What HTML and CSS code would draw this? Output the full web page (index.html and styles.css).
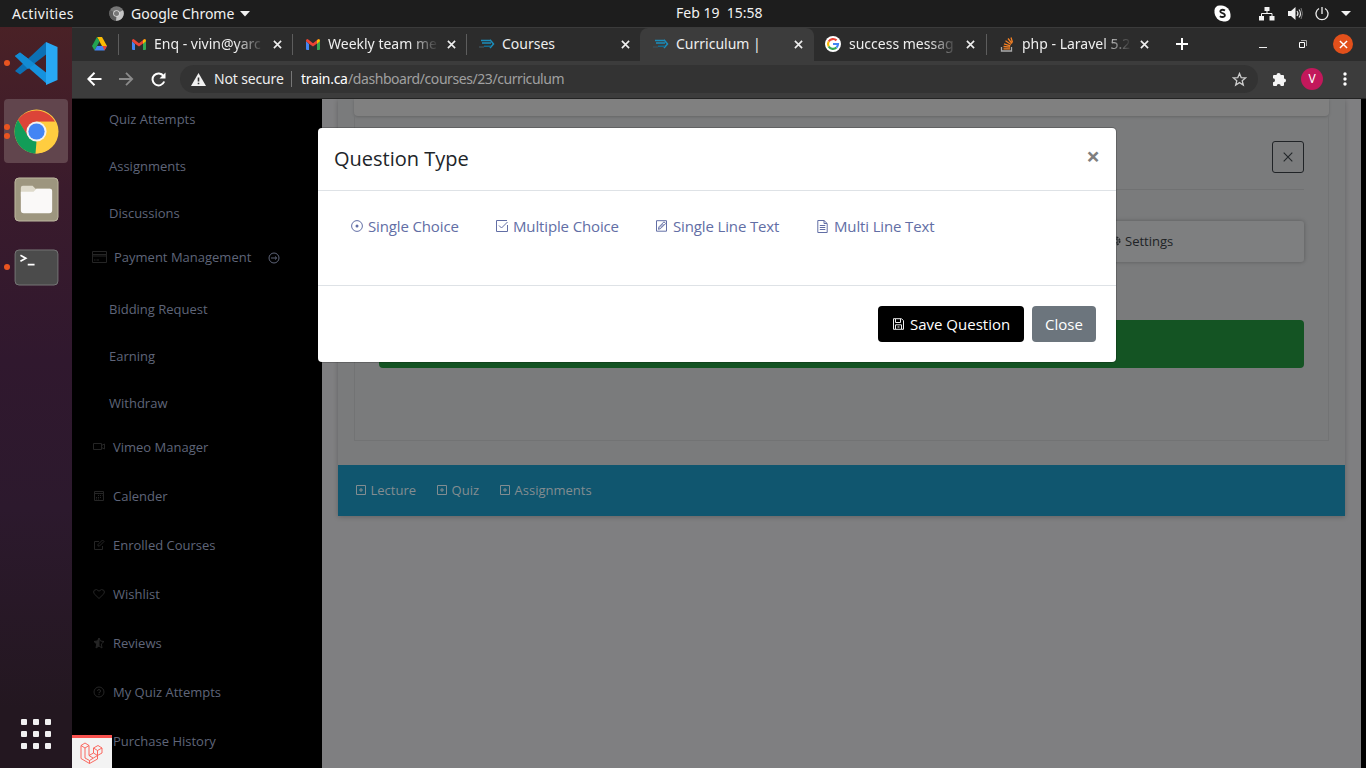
FILE: index.html
```html
<!DOCTYPE html>
<html lang="en">
<head>
<meta charset="utf-8">
<title>Curriculum</title>
<link rel="stylesheet" href="styles.css">
</head>
<body>
<svg class="defs" width="0" height="0">
  <symbol id="gmail" viewBox="0 0 14 11"><path fill="#4285f4" d="M0 2v8q0 1 1 1h2V5z"/><path fill="#34a853" d="M14 2v8q0 1-1 1h-2V5z"/><path fill="#ea4335" d="M0 2.200V1.500Q0 0 1.600 0L7 4.200 12.400 0l1.200.5-2.600 3.900L7 7.500 3 4.700z"/><path fill="#fbbc04" d="M11 1.200Q12.500-.5 13.600.5q.4.500.4 1.700L11 5z"/></symbol>
  <symbol id="train" viewBox="0 0 16 10"><path fill="none" stroke="#1b8dbb" stroke-width="1.500" d="M2 1.500h9M3 4h9M11 .8 14.500 5 11 9"/><path fill="none" stroke="#3c4d55" stroke-width="1.500" d="M0 8h5"/><path fill="none" stroke="#126b90" stroke-width="1.500" d="M5 7.300h7"/></symbol>
  <symbol id="x" viewBox="0 0 10 10"><path d="M1 1l8 8M9 1L1 9" fill="none" stroke="currentColor" stroke-width="1.800"/></symbol>
  <symbol id="plus" viewBox="0 0 10 10"><path d="M.5.500h9v9h-9zM5 3v4M3 5h4" fill="none" stroke="currentColor"/></symbol>
</svg>
<header class="topbar">
  <span class="activities">Activities</span>
  <svg class="mini-chrome" width="15" height="15" viewBox="0 0 15 15"><circle cx="7.500" cy="7.500" r="7.300" fill="#777"/><path d="M7.500 7.500 14 4.300A7.300 7.300 0 0 1 7 14.800z" fill="#c4c4c4"/><path d="M7.500 7.500 7 14.800A7.300 7.300 0 0 1 1.200 4z" fill="#5d5d5d"/><circle cx="7.500" cy="7.500" r="3.300" fill="#ddd"/><circle cx="7.500" cy="7.500" r="2.500" fill="#777"/></svg>
  <span class="appname">Google Chrome</span>
  <svg class="app-arrow" width="10" height="6"><path d="M0 0h10L5 5.500z" fill="#f2f2f2"/></svg>
  <span class="clock">Feb 19&nbsp; 15:58</span>
  <div class="tray">
    <svg width="17" height="17" viewBox="0 0 17 17"><rect x=".5" y=".5" width="12" height="12" rx="5" fill="#fff"/><rect x="4.500" y="4.500" width="12" height="12" rx="5" fill="#fff"/><circle cx="8.500" cy="8.500" r="7.500" fill="#fff"/><path d="M11 5.600Q8.500 4 6.600 5.500 5.500 7.200 8.500 8.200 11.800 9.200 10.600 11.200 8.500 12.800 5.800 11.300" fill="none" stroke="#1d1d1d" stroke-width="1.800"/></svg>
    <svg width="16" height="14" viewBox="0 0 16 14"><path d="M5.500 0h5v4h-5zM0 9h5v4.500H0zM10.500 9h5v4.500h-5z" fill="#f2f2f2"/><path d="M8 4v2.500M2.500 9V6.500h10.500V9" fill="none" stroke="#f2f2f2"/></svg>
    <svg width="16" height="13" viewBox="0 0 16 13"><path d="M0 4h3l4.500-4v13L3 9H0z" fill="#f2f2f2"/><path d="M9 4q2 2.500 0 5M11 2.500q3 4 0 8" fill="none" stroke="#ddd" stroke-width="1.200"/><path d="M13 1q3 5.500 0 11" fill="none" stroke="#777"/></svg>
    <svg width="14" height="14" viewBox="0 0 14 14"><path d="M4 1.500a6 6 0 1 0 6 0M7 0v7" fill="none" stroke="#eee" stroke-width="1.300"/></svg>
    <svg width="10" height="6"><path d="M0 0h10L5 5z" fill="#f2f2f2"/></svg>
  </div>
</header>
<div class="desktop">
  <nav class="dock">
    <div class="app"><i class="dots"><b></b></i>
      <svg width="43" height="43" viewBox="0 0 43 43"><path d="M0 14 5 10.500 33 32 32 42z" fill="#1592de"/><path d="M0 29 5 32.500 33 11 31 0z" fill="#0c70b5"/><path d="M0 14 5 10.500 20 22 13 27z" fill="#128bd4"/><path d="M31 0l11.500 5v33L31 43z" fill="#28a8f4"/></svg></div>
    <div class="app running"><i class="dots"><b></b><b></b></i>
      <svg width="45" height="45" viewBox="0 0 46 46"><circle cx="23" cy="23" r="22.500" fill="#ffcd40"/><path d="M23 13 14 28 4 11A22.500 22.500 0 0 1 42 13z" fill="#dc4438"/><path d="M4 11 14.500 28 23 33 22 45.500A22.500 22.500 0 0 1 4 11z" fill="#129d58"/><path d="M32 27 22 45.500A22.500 22.500 0 0 0 42 13H23z" fill="#ffcd40"/><circle cx="23" cy="23" r="10.300" fill="#f2f2f2"/><circle cx="23" cy="23" r="8.300" fill="#4385f4"/></svg></div>
    <div class="app"><i class="dots"></i>
      <svg width="45" height="45" viewBox="0 0 46 46"><rect x="1" y="1" width="44" height="44" rx="4" fill="#9d967f" stroke="#c0b9a2"/><path d="M7 17V11q0-2 2-2h10l3 3h15v8H7z" fill="#dedacb"/><path d="M7 15h13l3-3h14q2 0 2 2v20q0 3-3 3H10q-3 0-3-3z" fill="#faf9f8"/></svg></div>
    <div class="app"><i class="dots"><b></b></i>
      <svg width="45" height="37" viewBox="0 0 46 38"><rect x="1" y="1" width="44" height="36" rx="4" fill="#4b4b4b" stroke="#777"/><path d="M6.500 6.500 12 9.500l-5.500 3M14 16h7" fill="none" stroke="#fff" stroke-width="1.700"/></svg></div>
    <div class="grid-btn"><b></b><b></b><b></b><b></b><b></b><b></b><b></b><b></b><b></b></div>
  </nav>
  <section class="browser">
    <div class="tabs">
      <div class="pin"><svg width="15" height="14" viewBox="0 0 15 14"><path d="M5 0h5l5 9h-5z" fill="#fbbc04"/><path d="M5 0 0 9l2.500 4.500L7.500 4.500z" fill="#22a352"/><path d="M5 9h10l-2.500 4.500h-10z" fill="#4285f4"/><path d="M10.500 9H15l-2.500 4.500z" fill="#ea4335"/></svg></div>
      <div class="tab sep"><svg class="fav" width="15" height="11"><use href="#gmail"/></svg><span class="title fade t1">Enq - vivin@yarc</span><svg class="tx"><use href="#x"/></svg></div>
      <div class="tab sep"><svg class="fav" width="15" height="11"><use href="#gmail"/></svg><span class="title fade t2">Weekly team me</span><svg class="tx"><use href="#x"/></svg></div>
      <div class="tab sep"><svg class="fav" width="16" height="10"><use href="#train"/></svg><span class="title">Courses</span><svg class="tx"><use href="#x"/></svg></div>
      <div class="tab active"><svg class="fav" width="16" height="10"><use href="#train"/></svg><span class="title">Curriculum |</span><svg class="tx"><use href="#x"/></svg></div>
      <div class="tab google"><svg class="fav" width="16" height="16" viewBox="0 0 16 16"><circle cx="8" cy="8" r="8" fill="#fff"/><g fill="none" stroke-width="2.200"><path d="M3.700 5.500A5 5 0 0 1 11.500 4.400" stroke="#ea4335"/><path d="M3.700 5.500a5 5 0 0 0 0 5" stroke="#fbbc04"/><path d="M3.700 10.500a5 5 0 0 0 7.800 1" stroke="#34a853"/><path d="M8 8h5q0 2.200-1.500 3.500" stroke="#4285f4"/></g></svg><span class="title fade t5">success messag</span><svg class="tx"><use href="#x"/></svg></div>
      <div class="tab sep last"><svg class="fav" width="13" height="15" viewBox="0 0 13 15"><path d="M1 10v4h10v-4" fill="none" stroke="#aaa" stroke-width="1.300"/><path d="M3 11.800h6.500M3 9.500l6.500.6M3.500 6.800l6.300 2M5 3.800l5.500 3.700M7.500 1.500l4 5M10.500.5l1.500 5" fill="none" stroke="#f48024" stroke-width="1.300"/></svg><span class="title fade t6">php - Laravel 5.2</span><svg class="tx"><use href="#x"/></svg></div>
      <div class="newtab"><svg width="12" height="12"><path d="M6 0v12M0 6h12" stroke="#fff" stroke-width="2"/></svg></div>
      <div class="winbtns">
        <svg width="8" height="10"><path d="M0 8.500h8" stroke="#eee"/></svg>
        <svg width="8" height="8"><path d="M.5 2.500h5v5h-5z" fill="none" stroke="#fff"/><path d="M2 .5h5.500V6" fill="none" stroke="#aaa"/></svg>
        <span class="winclose"><svg width="9" height="9" viewBox="0 0 10 10"><path d="M1 1l8 8M9 1L1 9" stroke="#fff" stroke-width="1.600"/></svg></span>
      </div>
    </div>
    <div class="toolbar">
      <svg width="15" height="14" viewBox="0 0 15 14"><path d="M14.500 7H1.500M7.500.8 1.300 7l6.200 6.200" fill="none" stroke="#fff" stroke-width="2"/></svg>
      <svg width="15" height="14" viewBox="0 0 15 14"><path d="M0 7h13M7 .8 13.200 7 7 13.200" fill="none" stroke="#8b8b8b" stroke-width="1.800"/></svg>
      <svg width="15" height="15" viewBox="0 0 15 15"><path d="M12.500 4A6 6 0 1 0 13.200 9.500" fill="none" stroke="#fff" stroke-width="2"/><path d="M14.500.5v6h-6z" fill="#fff"/></svg>
      <div class="omnibox">
        <svg width="15" height="13" viewBox="0 0 15 13"><path d="M7.500 0 15 13H0z" fill="#f1f1f1"/><path d="M7.500 4.500v4M7.500 9.700v1.600" stroke="#333" stroke-width="1.600"/></svg>
        <span class="notsecure">Not secure</span><i class="bar"></i><span class="host">train.ca</span><span class="path">/dashboard/courses/23/curriculum</span>
        <svg class="star" width="15" height="15" viewBox="0 0 15 15"><path d="M7.500 1.500 9.200 5.600l4.400.3-3.400 2.800 1.100 4.300-3.800-2.400L3.700 13l1.100-4.300L1.400 5.900l4.400-.3z" fill="none" stroke="#ccc" stroke-width="1.300"/></svg>
      </div>
      <svg class="puzzle" width="15" height="15" viewBox="0 0 15 15"><path d="M4.500 3a2.100 2.100 0 0 1 4.200 0H11q1 0 1 1v2.500a2 2 0 0 1 0 4V13q0 1-1 1H8.700a2 2 0 0 0-4 0H2q-1 0-1-1v-2.700a2 2 0 0 0 0-4V4q0-1 1-1z" fill="#f5f5f5"/></svg>
      <span class="avatar">V</span>
      <svg class="kebab" width="4" height="14"><circle cx="2" cy="2" r="1.700" fill="#fff"/><circle cx="2" cy="7" r="1.700" fill="#fff"/><circle cx="2" cy="12" r="1.700" fill="#fff"/></svg>
    </div>
    <div class="page">
      <aside class="sidebar">
        <ul class="sub first"><li>Quiz Attempts</li><li>Assignments</li><li>Discussions</li></ul>
        <div class="item pay"><svg width="15" height="12" viewBox="0 0 15 12"><path d="M.5.500h14v11H.5zM.5 3.500h14v1.500H.5zM2 9h1.500M4.500 9H7" fill="none" stroke="currentColor"/></svg><span>Payment Management</span><svg class="go" width="12" height="12" viewBox="0 0 12 12"><circle cx="6" cy="6" r="5" fill="none" stroke="#5f6579"/><path d="M3 6h5.500M7 4.500 8.700 6 7 7.500" fill="none" stroke="#5f6579"/></svg></div>
        <ul class="sub"><li>Bidding Request</li><li>Earning</li><li>Withdraw</li></ul>
        <div class="item"><svg width="12" height="12" viewBox="0 0 12 12"><path d="M.5 2.500h8v6h-8zM8.500 4.500l3-1.500v5l-3-1.500" fill="none" stroke="currentColor"/></svg><span>Vimeo Manager</span></div>
        <div class="item"><svg width="12" height="12" viewBox="0 0 12 12"><path d="M1.500 1.500h9v9h-9zM1.500 3.500h9" fill="none" stroke="currentColor"/><path d="M5 5.500h4.500M3 7.500h6M3 9h4" fill="none" stroke="currentColor" stroke-dasharray="1 1"/></svg><span>Calender</span></div>
        <div class="item"><svg width="12" height="12" viewBox="0 0 12 12"><path d="M6 2.500H1.500v8h8V7M5 7V5.500L9.500 1l1.500 1.500L6.500 7z" fill="none" stroke="currentColor"/></svg><span>Enrolled Courses</span></div>
        <div class="item"><svg width="12" height="12" viewBox="0 0 12 12"><path d="M6 10.500 1.200 5.800Q0 4 1.200 2.300q2.300-2 4.800.9 2.500-2.900 4.800-.9Q12 4 10.800 5.800z" fill="none" stroke="currentColor"/></svg><span>Wishlist</span></div>
        <div class="item"><svg width="12" height="12" viewBox="0 0 12 12"><path d="M6 1v8l-3 2 .7-4L1 4.500l3.500-.6z" fill="currentColor" stroke="currentColor"/><path d="M6 1l1.500 3 3.500.5L8.300 7l.7 4-3-2" fill="none" stroke="currentColor"/></svg><span>Reviews</span></div>
        <div class="item"><svg width="12" height="12" viewBox="0 0 12 12"><circle cx="6" cy="6" r="5" fill="none" stroke="currentColor"/><path d="M4.500 5q0-1.500 1.500-1.500T7.500 5 6 6.500v.8M6 8v1" fill="none" stroke="currentColor"/></svg><span>My Quiz Attempts</span></div>
        <div class="item"><svg width="12" height="12"></svg><span>Purchase History</span></div>
      </aside>
      <main class="content">
        <div class="panel">
          <div class="topcard"></div>
          <div class="box">
            <div class="boxhead"><span class="closebox"><svg width="10" height="10" viewBox="0 0 10 10"><path d="M.7.700l8.600 8.600M9.300.7.700 9.300" stroke="#222629" stroke-width="1.100"/></svg></span></div>
            <div class="steps"><svg width="10" height="10" viewBox="0 0 10 10"><circle cx="5" cy="5" r="3.700" fill="none" stroke="#26292c" stroke-width="1.700" stroke-dasharray="1.900 1"/><circle cx="5" cy="5" r="2" fill="none" stroke="#26292c"/></svg><span>Settings</span></div>
            <div class="addq"></div>
          </div>
          <div class="actions"><span><svg width="10" height="10"><use href="#plus"/></svg>Lecture</span><span><svg width="10" height="10"><use href="#plus"/></svg>Quiz</span><span><svg width="10" height="10"><use href="#plus"/></svg>Assignments</span></div>
        </div>
      </main>
      <div class="scroll"></div>
      <div class="modal">
        <div class="mhead"><h5>Question Type</h5><span class="mclose">×</span></div>
        <div class="mbody">
          <a class="q1"><svg width="12" height="12" viewBox="0 0 12 12"><circle cx="6" cy="6" r="5.400" fill="none" stroke="currentColor"/><circle cx="6" cy="6" r="1.500" fill="currentColor"/></svg>Single Choice</a>
          <a class="q2"><svg width="12" height="12" viewBox="0 0 12 12"><path d="M11.500 5v6.500H.5V.5h10.500M3 5.500 5.500 8 11.500 2" fill="none" stroke="currentColor"/></svg>Multiple Choice</a>
          <a class="q3"><svg width="11" height="12" viewBox="0 0 11 12"><path d="M.5.700h10v10.500H.5zM2.500 9.300l.5-2.500 5-5 1.700 1.700-5 5zM4 7.500l3.500-3.500" fill="none" stroke="currentColor"/></svg>Single Line Text</a>
          <a class="q4"><svg width="11" height="13" viewBox="0 0 11 13"><path d="M.8.500H7l3.200 3v9H.8zM7 .5v3h3M2.800 5.500h5.500M2.800 7.500h5.500M2.800 9.500h5.500" fill="none" stroke="currentColor"/></svg>Multi Line Text</a>
        </div>
        <div class="mfoot"><button class="save"><svg width="11" height="12" viewBox="0 0 11 12"><path d="M.5.700h8l2 2v8.600H.5zM2.500 1v3.500h5V1M2.500 11V6.800h6V11M4.500 9h2" fill="none" stroke="#eee"/></svg>Save Question</button><button class="close">Close</button></div>
      </div>
      <div class="debug"><svg width="23" height="22" viewBox="0 0 23 22"><path d="M1 3.500 5 1l4 2.500v10l4.500-2.500V6L18 3.500 22 6v5l-4.500 2.500v3.500L9.500 21.500 1 16.500zM1 3.500 5 6l4-2.500M5 6v10l4.500 2.500v3M9.500 18.500l8-5M13.500 6l4 2.500L22 6M17.500 8.500v5L13.500 11M9 13.500l4 2.500" fill="none" stroke="#fb5a50" stroke-width=".9"/></svg></div>
    </div>
  </section>
</div>
</body>
</html>
```
FILE: styles.css
```css
* { box-sizing: border-box; }
body { margin: 0; width: 1366px; height: 768px; overflow: hidden; background: #000; font-family: "Open Sans", "Noto Sans", sans-serif; }
svg { display: block; flex: none; }
.defs { position: absolute; }
.topbar { height: 27px; background: #1d1d1d; color: #f2f2f2; display: flex; align-items: center; font: 14px/26px "Noto Sans", sans-serif; position: relative; padding-left: 12px; white-space: nowrap; }
.activities { width: 97px; letter-spacing: .35px; }
.appname { margin-left: 7px; width: 109px; }
.clock { position: absolute; left: 676px; top: 0; }
.tray { margin-left: auto; display: flex; align-items: center; padding-right: 15px; height: 26px; }
.tray svg:nth-child(2) { margin-left: 28px; }
.tray svg:nth-child(3) { margin-left: 13px; }
.tray svg:nth-child(4) { margin-left: 11px; }
.tray svg:nth-child(5) { margin-left: 12px; }
.desktop { display: flex; height: 741px; }
.dock { width: 72px; height: 741px; background: linear-gradient(#4a2126, #3a1b2c 22%, #30182e 45%, #2c192d 65%, #231720 92%); display: flex; flex-direction: column; padding: 4px 4px 19px 4px; }
.app { width: 64px; height: 64px; margin-bottom: 4px; border-radius: 4px; display: flex; align-items: center; padding-left: 0; }
.app svg { margin: 0 auto 0 3.500px; }
.app:first-child svg { margin-left: 5px; }
.running { background: #61454d; }
.dots { width: 6px; display: flex; flex-direction: column; gap: 3px; }
.dots b { width: 6px; height: 6px; border-radius: 50%; background: #e95420; }
.grid-btn { margin: auto auto 0 17px; display: grid; grid-template-columns: repeat(3, 6px); gap: 6px; }
.grid-btn b { width: 6px; height: 6px; border-radius: 1px; background: #f1f1f1; }
.browser { flex: 1; min-width: 0; }
.tabs { height: 34px; background: #2c2c2c; border-top: 1px solid #3b3b3b; padding-bottom: 1px; display: flex; }
.pin { width: 46px; padding: 9px 0 0 20px; }
.tab { width: 174px; padding-left: 13px; display: flex; align-items: center; position: relative; color: #eee; font: 14px/31px "Noto Sans", sans-serif; }
.sep::before { content: ""; position: absolute; left: 0; top: 6px; width: 1px; height: 21px; background: #5d5d5d; }
.fav { width: 16px; }
.title { width: 113px; margin-left: 7px; overflow: hidden; white-space: nowrap; padding-bottom: 1px; }
.fade { -webkit-mask-image: linear-gradient(90deg, #000 72%, transparent 98%); mask-image: linear-gradient(90deg, #000 72%, transparent 98%); }
.tx { width: 9px; height: 9px; margin-left: 6px; }
.active { background: #3c3c3c; border-radius: 8px 8px 0 0; margin-bottom: -1px; padding-bottom: 1px; }
.google { width: 172px; padding-left: 11px; }
.google .title { margin-left: 8px; width: 111px; }
.active .title { width: 112px; }
.last { width: 173px; }
.last .title { width: 112px; }
.newtab { padding: 10px 0 0 17px; }
.winbtns { margin-left: auto; display: flex; align-items: center; padding-right: 13px; }
.winbtns svg:first-child { margin-right: 32px; }
.winclose { width: 20px; height: 20px; border-radius: 50%; background: #e2501b; margin-left: 26px; display: flex; align-items: center; justify-content: center; }
.winbtns .winclose svg { margin: 0; }
.toolbar { height: 38px; background: #3c3c3c; border-bottom: 1px solid #242424; display: flex; align-items: center; padding: 0 0 1px 15px; gap: 17px; position: relative; }
.omnibox { width: 1078px; height: 28px; margin-left: -3px; border-radius: 14px; background: #333; display: flex; align-items: center; font: 14px/26px "Noto Sans", sans-serif; padding: 0 11px; color: #eee; white-space: nowrap; }
.notsecure { margin-left: 8px; width: 76px; letter-spacing: -.15px; }
.bar { width: 1px; height: 16px; background: #777; margin: 0 9px 0 1px; }
.host { color: #fff; width: 47px; letter-spacing: -.3px; }
.path { color: #a0a0a0; letter-spacing: -.43px; }
.star { margin-left: auto; }
.puzzle { margin-left: -3px; }
.avatar { width: 22px; height: 22px; border-radius: 50%; background: #c2185b; color: #fff; font: 12px/22px "Noto Sans", sans-serif; text-align: center; margin-left: -3px; }
.kebab { margin-left: 3px; }
.page { height: 669px; display: flex; overflow: hidden; position: relative; }
.sidebar { width: 250px; background: #000; color: #5f6579; font-size: 13px; line-height: 20px; overflow: hidden; }
.sub { list-style: none; margin: 4px 0 -4px; padding: 0; }
.sub li { height: 47px; padding: 14px 0 0 37px; }
.first { margin-top: -4px; margin-bottom: -4px; }
.item { height: 49px; display: flex; align-items: center; padding-left: 21px; color: #252525; }
.item span { color: #5f6579; margin-left: 8px; }
.pay { padding-left: 20px; }
.pay span { margin-left: 7px; }
.go { margin: 2px 0 0 17px; }
.content { width: 1039px; background: #7f7f81; padding: 0 16px; }
.panel { height: 417px; background: #7a7b7c; box-shadow: 0 1px 5px rgba(0,0,0,.23); display: flex; flex-direction: column; }
.topcard { margin: 0 16px; height: 17px; background: #808080; border-radius: 0 0 4px 4px; box-shadow: 0 1px 3px rgba(0,0,0,.18); }
.box { margin: 0 16px; height: 325px; border: 1px solid #727374; border-top: 0; padding: 0 24px; }
.boxhead { height: 74px; border-bottom: 1px solid #707172; padding-top: 25px; }
.closebox { width: 32px; height: 32px; margin-left: auto; border: 1px solid #202326; border-radius: 3px; display: flex; align-items: center; justify-content: center; }
.steps { margin-top: 31px; height: 41px; background: #7e7f80; border-radius: 3px; box-shadow: 0 0 4px rgba(0,0,0,.27); display: flex; align-items: center; padding: 0 0 2px 732px; font-size: 13px; color: #202326; }
.steps span { margin-left: 4px; }
.addq { margin-top: 58px; height: 48px; border-radius: 4px; background: #145423; }
.actions { margin-top: auto; height: 51px; background: #10566f; color: #838d91; display: flex; gap: 21px; align-items: center; padding: 0 0 2px 18px; font-size: 13px; }
.actions span { display: flex; align-items: center; gap: 4.500px; }
.scroll { width: 5px; background: #000; }
.modal { position: absolute; left: 246px; top: 29px; width: 798px; height: 234px; background: #fff; border-radius: 4px; box-shadow: 0 0 0 1px rgba(0,0,0,.2); }
.mhead { height: 63px; border-bottom: 1px solid #dee2e6; padding: 16px; display: flex; justify-content: space-between; }
h5 { margin: 0; font: 400 20px/30px "Open Sans", sans-serif; color: #212529; }
.mclose { font: 700 24px/24px "Open Sans", sans-serif; color: #7f7f7f; margin-right: 0; }
.mbody { height: 94px; padding: 24px 33px; display: flex; color: #626ea5; font-size: 15px; line-height: 22px; letter-spacing: -.14px; white-space: nowrap; }
.mbody a { display: flex; align-items: center; gap: 5px; height: 22px; }
.mbody .q1 { width: 145px; }
.mbody .q2 { width: 160px; }
.mbody .q3 { width: 161px; gap: 6px; }
.mbody .q4 { gap: 6px; }
.mfoot { height: 77px; border-top: 1px solid #dee2e6; padding: 20px; display: flex; justify-content: flex-end; gap: 8px; }
button { height: 36px; border: 0; border-radius: 4px; color: #fff; font: 15px/36px "Open Sans", sans-serif; display: flex; align-items: center; padding: 0; white-space: nowrap; }
.save { width: 146px; background: #000; padding-left: 15px; gap: 6px; }
.close { width: 64px; background: #6c757d; justify-content: center; }
.debug { position: absolute; left: 0; bottom: 0; width: 40px; height: 33px; border-top: 3px solid #f9524f; background: #f3f3f3; padding: 4px 8px; }
```
